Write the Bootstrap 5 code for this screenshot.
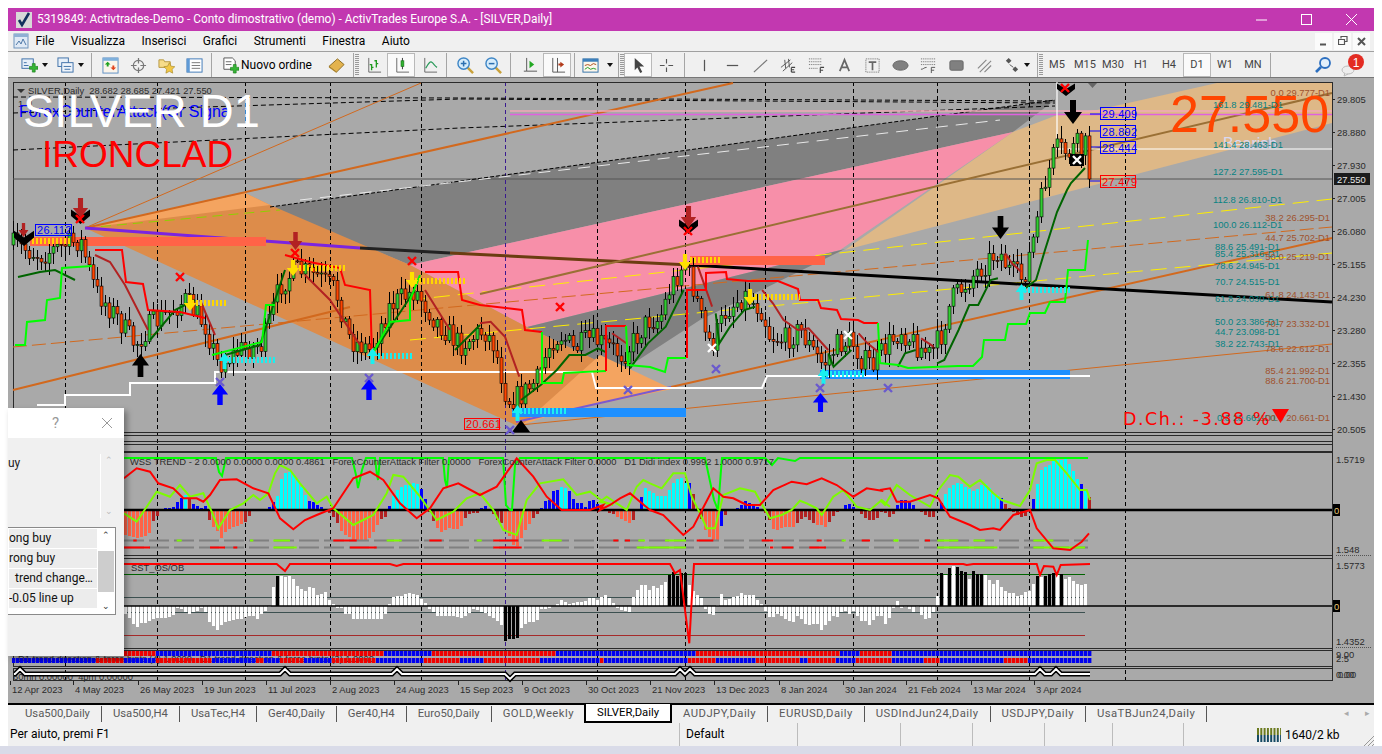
<!DOCTYPE html>
<html lang="it">
<head>
  <meta charset="UTF-8" />
  <title>SILVER,Daily</title>
  <link href="https://cdn.jsdelivr.net/npm/bootstrap@5.3.3/dist/css/bootstrap.min.css" rel="stylesheet" />
  <style>
    html, body { height: 100%; overflow: hidden; background: #fff; }
    body { font-family: Roboto, "Noto Sans", sans-serif; font-size: 12px; color: #000; }

    .app { width: 1366px; height: 746px; margin: 8px 8px 0; }

    .titlebar { height: 23px; background: #c238b0; color: #fff; font-size: 11.9px; }
    .titlebar .app-ico { width: 16px; height: 16px; margin: 0 5px 0 8px; }
    .win-btn { width: 45px; height: 23px; }

    .menubar { height: 21px; background: #f0f0f0; gap: 16.5px; padding-left: 5px; border-bottom: 1px solid #a0a0a0; }
    .menu-ico { width: 16px; height: 16px; margin-right: -10px; }
    .mdi-btn { width: 17px; height: 17px; background: #fbfbfb; margin-left: 2px; }

    .toolbar { height: 26px; background: #f0f0f0; padding: 1px 0 0 8px; border-bottom: 1px solid #777; }
    .tool { width: 28px; height: 24px; flex: none; }
    .tool svg { width: 17px; height: 17px; }
    .tool-w36 { width: 36px; }
    .tool-on { background: #fafafa; outline: 1px solid #b9b9b9; outline-offset: -1px; }
    .tool-sep { width: 1px; height: 24px; background: #a5a5a5; margin: 0 4px 0 3px; flex: none; }
    .tool-sep-wide { margin: 0 5px 0 4px; }
    .tool-grip { width: 4px; height: 22px; margin-left: -3px; flex: none;
      background: repeating-linear-gradient(#9a9a9a 0 1px, #f0f0f0 1px 2px); }
    .tool-order { width: 106px; }
    .tool-order svg { margin: 0 2px 0 6px; }
    .tf { color: #444; font-size: 11px; }
    .caret-mini { width: 0; height: 0; border: 3px solid transparent; border-top: 4px solid #111; border-bottom: 0; }

    .chart-wrap { height: 625px; background: #a9a9a9; }
    .chart-svg { display: block; }
    .chart-svg text { font-family: "Liberation Sans", sans-serif; font-size: 9.4px; white-space: pre; }
    .t-dark { fill: #2b2b2b; }
    .t-fib { fill: #078383; }
    .t-fib2 { fill: #a0522d; }
    .chart-svg .t-big { font-size: 47px; fill: #fff; }
    .chart-svg .t-iron { font-size: 37px; fill: #f00; }
    .chart-svg .t-blue { font-size: 16px; fill: #00f; }
    .chart-svg .t-last { font-size: 52px; fill: #ff4500; }
    .chart-svg .t-bear { font-size: 16px; fill: #d8d8f0; }
    .chart-svg .t-dch { font-family: "DejaVu Sans", sans-serif; font-size: 17.5px; fill: #f00; letter-spacing: 1.5px; }
    .chart-svg .t-box { font-size: 11px; letter-spacing: .3px; }

    .dlg { position: absolute; left: 0; top: 330px; width: 116px; height: 248px; background: #f0f0f0; box-shadow: 3px 3px 6px rgba(0,0,0,.35); }
    .dlg-head { height: 30px; background: #fff; color: #999; padding-left: 44px; }
    .dlg-head span:first-child { width: 49px; font-size: 15px; }
    .dlg-top { height: 89px; padding-top: 16px; }
    .dlg-top .dlg-uy { width: 92px; color: #222; }
    .dlg-scroll { width: 17px; height: 64px; border-left: 1px solid #fff; color: #bbb; font-size: 9px; }
    .dlg-list { width: 108px; height: 88px; border: 1px solid #8a8a8a; border-left: 0; background: #fff; padding: 1px; }
    .dlg-rows { width: 91px; overflow: hidden; }
    .dlg-row { height: 19px; margin-bottom: 1px; background: #ececec; line-height: 19px; white-space: nowrap; color: #111; }
    .dlg-row2 { padding-left: 6px; }
    .dlg-sb { width: 16px; margin-left: 1px; color: #333; font-size: 9px; }
    .dlg-thumb { height: 41px; background: #cdcdcd; }

    .tabbar { height: 20px; background: #f0f0f0; border-top: 2px solid #000; padding-left: 6px; color: #5a5a5a; font-size: 11.3px; }
    .tab-it { padding: 0 11px; line-height: 16px; height: 16px; border-right: 1px solid #555; white-space: nowrap; }
    .tab-caps { letter-spacing: .45px; }
    .tab-on { background: #fff; color: #000; border: 2px solid #000; border-top: 0; height: 19px; margin: -1px 0 0 -1px; line-height: 18px; padding: 0 11px; }
    .tab-arr { color: #aaa; font-size: 9px; }

    .statusbar { height: 23px; background: #f0f0f0; }
    .st-cell { height: 100%; line-height: 22px; border-right: 1px solid #bcbcbc; padding-left: 6px; }
    .st-help { width: 672px; padding-left: 2px; }
    .st-prof { width: 118px; }
    .st-c1 { width: 103px; }
    .st-c2 { width: 72px; }
    .st-c3 { width: 68px; }
    .st-c4 { width: 71px; }
    .st-net { padding-left: 73px; }
    .desk { height: 8px; margin: 0 -8px; background: #d9dbe8; }
  </style>
</head>
<body>
<div class="app d-flex flex-column">

  <!-- title bar -->
  <div class="titlebar d-flex align-items-center">
    <svg class="app-ico" viewBox="0 0 16 16"><rect width="16" height="16" fill="#d8d8d8"/><path d="M3 8l3 5 7-12" fill="none" stroke="#12305c" stroke-width="2.6"/></svg>
    <span class="flex-grow-1">5319849: Activtrades-Demo - Conto dimostrativo (demo) - ActivTrades Europe S.A. - [SILVER,Daily]</span>
    <div class="win-btn d-flex align-items-center justify-content-center"><svg width="11" height="11"><path d="M0 6h11" stroke="#fff"/></svg></div>
    <div class="win-btn d-flex align-items-center justify-content-center"><svg width="11" height="11"><rect x=".5" y=".5" width="10" height="10" fill="none" stroke="#fff"/></svg></div>
    <div class="win-btn d-flex align-items-center justify-content-center"><svg width="11" height="11"><path d="M0 0l11 11M11 0L0 11" stroke="#fff"/></svg></div>
  </div>

  <!-- menu bar -->
  <div class="menubar d-flex align-items-center">
    <svg class="menu-ico" viewBox="0 0 16 16"><rect x="1" y="1" width="14" height="14" fill="#dfe9f5" stroke="#6f93bb"/><rect x="1" y="1" width="14" height="3" fill="#8fb0d4"/><path d="M3 12l3-4 2 3 2-5 3 6" fill="none" stroke="#5079a8"/></svg>
    <span>File</span><span>Visualizza</span><span>Inserisci</span><span>Grafici</span><span>Strumenti</span><span>Finestra</span><span>Aiuto</span>
    <div class="ms-auto d-flex me-1">
      <div class="mdi-btn d-flex align-items-center justify-content-center"><svg width="9" height="9"><path d="M1 7.5h6" stroke="#555" stroke-width="2"/></svg></div>
      <div class="mdi-btn d-flex align-items-center justify-content-center"><svg width="10" height="10"><path d="M3 2.5V.5h6v5H7M.5 3.5h6v5h-6z" fill="none" stroke="#555" stroke-width="1.2"/></svg></div>
      <div class="mdi-btn d-flex align-items-center justify-content-center"><svg width="9" height="9"><path d="M1 1l7 7M8 1L1 8" stroke="#555" stroke-width="2"/></svg></div>
    </div>
  </div>

  <!-- tool bar -->
  <div class="toolbar d-flex align-items-center">
    <div class="tool tool-w36 d-flex align-items-center justify-content-center gap-1">
      <svg viewBox="0 0 18 18"><rect x="1" y="2" width="12" height="10" fill="#e6eff9" stroke="#3d6fa8"/><path d="M3 6h3M3 9h5" stroke="#3d6fa8"/><path d="M9 10h3V7h3v3h3v3h-3v3h-3v-3H9z" fill="#35b535" stroke="#1c7d1c" stroke-width=".7"/></svg>
      <span class="caret-mini"></span>
    </div>
    <div class="tool tool-w36 d-flex align-items-center justify-content-center gap-1">
      <svg viewBox="0 0 18 18"><rect x="1" y="1" width="11" height="9" fill="#e6eff9" stroke="#3d6fa8"/><rect x="5" y="6" width="12" height="10" fill="#eef4fb" stroke="#3d6fa8"/><path d="M7 10h8M8 13h6" stroke="#3d6fa8"/></svg>
      <span class="caret-mini"></span>
    </div>
    <div class="tool-sep"></div>
    <div class="tool d-flex align-items-center justify-content-center"><svg viewBox="0 0 18 18"><rect x="1" y="1" width="16" height="16" fill="#fbf4ea" stroke="#5c8fc4"/><rect x="1" y="1" width="16" height="3" fill="#7fb0dc"/><path d="M6 5l3 3H7v2H5V8H3z" fill="#1da01d"/><path d="M12 14l-3-3h2V9h2v2h2z" fill="#e0421d"/></svg></div>
    <div class="tool d-flex align-items-center justify-content-center"><svg viewBox="0 0 18 18"><circle cx="9" cy="9" r="5.5" fill="none" stroke="#777" stroke-width="1.3"/><path d="M9 1v6M9 11v6M1 9h6M11 9h6" stroke="#777" stroke-width="1.3"/></svg></div>
    <div class="tool d-flex align-items-center justify-content-center"><svg viewBox="0 0 18 18"><path d="M1 3h5l1 2h6v6H1z" fill="#f7dc8a" stroke="#b7973f"/><path d="M12 6l1.8 3.7 4 .6-2.9 2.8.7 4-3.6-1.9-3.6 1.9.7-4-2.9-2.8 4-.6z" fill="#f2c744" stroke="#a88a2b" stroke-width=".7"/></svg></div>
    <div class="tool d-flex align-items-center justify-content-center"><svg viewBox="0 0 18 18"><rect x="1" y="2" width="16" height="14" fill="#fff" stroke="#3d78b8"/><rect x="1" y="2" width="3" height="14" fill="#5f9ad6"/><path d="M6 6h9M6 9h9M6 12h9" stroke="#777"/></svg></div>
    <div class="tool-sep"></div>
    <div class="tool tool-order d-flex align-items-center text-nowrap"><svg viewBox="0 0 18 18"><path d="M2 1h9l3 3v9H2z" fill="#fff" stroke="#555"/><path d="M4 5h6M4 8h6" stroke="#666"/><path d="M9 11h3V8h3v3h3v3h-3v3h-3v-3H9z" fill="#35b535" stroke="#1c7d1c" stroke-width=".7"/></svg><span>Nuovo ordine</span></div>
    <div class="tool d-flex align-items-center justify-content-center"><svg viewBox="0 0 18 18"><path d="M1 10l9-8 7 6-8 8z" fill="#e3b34e" stroke="#8a6a20"/><path d="M1 10l8 6v1L1 11z" fill="#b58a2e"/></svg></div>
    <div class="tool-sep"></div><div class="tool-grip"></div>
    <div class="tool d-flex align-items-center justify-content-center"><svg viewBox="0 0 18 18"><path d="M4 1v15h13" fill="none" stroke="#666"/><path d="M7 14V8H5M7 11h2M12 11V4h-2M12 7h2" fill="none" stroke="#1f9a1f" stroke-width="1.4"/></svg></div>
    <div class="tool tool-on d-flex align-items-center justify-content-center"><svg viewBox="0 0 18 18"><path d="M4 1v15h13" fill="none" stroke="#666"/><path d="M10 1v12" stroke="#333"/><rect x="8.500" y="4" width="3" height="6" fill="#2fb52f" stroke="#1a6d1a" stroke-width=".7"/></svg></div>
    <div class="tool d-flex align-items-center justify-content-center"><svg viewBox="0 0 18 18"><path d="M4 1v15h13" fill="none" stroke="#666"/><path d="M5 12c3-6 5-8 7-6s3 4 5 5" fill="none" stroke="#2a9a5a" stroke-width="1.3"/></svg></div>
    <div class="tool-sep"></div>
    <div class="tool d-flex align-items-center justify-content-center"><svg viewBox="0 0 18 18"><path d="M11 11l6 6" stroke="#c9a13a" stroke-width="2.6"/><circle cx="7" cy="7" r="6" fill="#d6ecfb" stroke="#3e86c6" stroke-width="1.5"/><path d="M7 4v6M4 7h6" stroke="#2b6fb0" stroke-width="1.6"/></svg></div>
    <div class="tool d-flex align-items-center justify-content-center"><svg viewBox="0 0 18 18"><path d="M11 11l6 6" stroke="#c9a13a" stroke-width="2.6"/><circle cx="7" cy="7" r="6" fill="#d6ecfb" stroke="#3e86c6" stroke-width="1.5"/><path d="M4 7h6" stroke="#2b6fb0" stroke-width="1.6"/></svg></div>
    <div class="tool-sep"></div>
    <div class="tool d-flex align-items-center justify-content-center"><svg viewBox="0 0 18 18"><path d="M6 1v14h11M3 15h3" fill="none" stroke="#555"/><path d="M9 4l5 4-5 4z" fill="#23a823"/></svg></div>
    <div class="tool tool-on d-flex align-items-center justify-content-center"><svg viewBox="0 0 18 18"><path d="M4 1v15h13M9 1v15" fill="none" stroke="#555"/><path d="M16 8l-4-3v2h-2v2h2v2z" fill="#b23a1a"/></svg></div>
    <div class="tool-sep"></div>
    <div class="tool tool-w36 d-flex align-items-center justify-content-center gap-2">
      <svg viewBox="0 0 18 18"><rect x="1" y="2" width="16" height="14" fill="#fdf6ea" stroke="#2f6fa8"/><rect x="1" y="2" width="16" height="3" fill="#3d7fbb"/><path d="M3 9l3-1 3 1 3-2 3 1" fill="none" stroke="#a84a1a"/><path d="M3 13l3-2 3 2 3-1 3 1" fill="none" stroke="#1f9a1f"/></svg>
      <span class="caret-mini"></span>
    </div>
    <div class="tool-sep"></div><div class="tool-grip"></div>
    <div class="tool tool-on d-flex align-items-center justify-content-center"><svg viewBox="0 0 18 18"><path d="M5 1l10 9h-5l3 6-2.2 1-3-6L5 14z" fill="#444"/></svg></div>
    <div class="tool d-flex align-items-center justify-content-center"><svg viewBox="0 0 18 18"><path d="M9 2v5M9 11v5M2 9h5M11 9h5" stroke="#555" stroke-width="1.2"/></svg></div>
    <div class="tool-sep tool-sep-wide"></div>
    <div class="tool d-flex align-items-center justify-content-center"><svg viewBox="0 0 18 18"><path d="M9 3v12" stroke="#555" stroke-width="1.3"/></svg></div>
    <div class="tool d-flex align-items-center justify-content-center"><svg viewBox="0 0 18 18"><path d="M3 9h12" stroke="#555" stroke-width="1.3"/></svg></div>
    <div class="tool d-flex align-items-center justify-content-center"><svg viewBox="0 0 18 18"><path d="M2 16L16 3" stroke="#777" stroke-width="1.3"/></svg></div>
    <div class="tool d-flex align-items-center justify-content-center"><svg viewBox="0 0 18 18"><path d="M1 11l10-8M3 15l10-9M5 3l1 9M9 2l1 9" stroke="#555" fill="none"/><path d="M12 11h4M12 13.5h3M12 16h4M12 11v5" stroke="#444" stroke-width="1.2" fill="none"/></svg></div>
    <div class="tool d-flex align-items-center justify-content-center"><svg viewBox="0 0 18 18"><path d="M1 2h14M1 5h14M1 8h14M1 12h10" stroke="#666" stroke-dasharray="1 1" fill="none"/><path d="M13 11h4M13 11v6M13 14h3" stroke="#444" stroke-width="1.2" fill="none"/></svg></div>
    <div class="tool d-flex align-items-center justify-content-center"><svg viewBox="0 0 18 18"><path d="M4 15L9 3l5 12M6 11h6" stroke="#666" stroke-width="1.8" fill="none"/></svg></div>
    <div class="tool d-flex align-items-center justify-content-center"><svg viewBox="0 0 18 18"><rect x="2" y="2" width="14" height="14" fill="none" stroke="#666" stroke-dasharray="1 1"/><path d="M5 5.5h8M9 5.5V14" stroke="#666" stroke-width="1.8"/></svg></div>
    <div class="tool d-flex align-items-center justify-content-center"><svg viewBox="0 0 18 18"><ellipse cx="9" cy="9" rx="8" ry="5" fill="#808080" stroke="#666"/></svg></div>
    <div class="tool d-flex align-items-center justify-content-center"><svg viewBox="0 0 18 18"><path d="M1 2h15M1 5h15M1 8h15" stroke="#666" stroke-dasharray="1 1" fill="none"/><path d="M1 13c3 0 3-2 6-2M12 11h4M12 11v6M12 14h3" stroke="#555" fill="none"/></svg></div>
    <div class="tool d-flex align-items-center justify-content-center"><svg viewBox="0 0 18 18"><rect x="2" y="4" width="14" height="10" rx="1.5" fill="#808080" stroke="#666"/></svg></div>
    <div class="tool d-flex align-items-center justify-content-center"><svg viewBox="0 0 18 18"><path d="M2 12l9-9M4 16L16 4M9 16l7-7" stroke="#888" stroke-width="1.2"/></svg></div>
    <div class="tool tool-w36 d-flex align-items-center justify-content-center gap-1"><svg viewBox="0 0 18 18"><path d="M6 1l3 3-3 3-3-3zM13 10l3 3-3 3-3-3z" fill="#555"/><path d="M7 8l4 3" stroke="#555"/></svg><span class="caret-mini"></span></div>
    <div class="tool-sep"></div><div class="tool-grip"></div>
    <div class="tool tf d-flex align-items-center justify-content-center">M5</div>
    <div class="tool tf d-flex align-items-center justify-content-center">M15</div>
    <div class="tool tf d-flex align-items-center justify-content-center">M30</div>
    <div class="tool tf d-flex align-items-center justify-content-center">H1</div>
    <div class="tool tf d-flex align-items-center justify-content-center">H4</div>
    <div class="tool tf tool-on d-flex align-items-center justify-content-center">D1</div>
    <div class="tool tf d-flex align-items-center justify-content-center">W1</div>
    <div class="tool tf d-flex align-items-center justify-content-center">MN</div>
    <div class="tool-sep"></div>
    <div class="ms-auto d-flex align-items-center gap-2 me-2">
      <svg width="18" height="18" viewBox="0 0 18 18"><circle cx="11" cy="7" r="5" fill="#e3f0fb" stroke="#2c6fc0" stroke-width="1.8"/><path d="M7 11l-5 5" stroke="#2c6fc0" stroke-width="2.6"/></svg>
      <svg width="26" height="24" viewBox="0 0 26 24"><ellipse cx="8" cy="17" rx="6" ry="4" fill="#eee" stroke="#bbb"/><path d="M5 20l-1 3 4-2" fill="#eee" stroke="#bbb"/><circle cx="16" cy="9" r="8" fill="#e32b22"/><text x="16" y="13.5" text-anchor="middle" fill="#fff" font-size="12" font-family="Liberation Sans">1</text></svg>
    </div>
  </div>

  <!-- chart area: a free canvas in screen coordinates -->
  <div class="chart-wrap position-relative">
    <svg class="chart-svg" id="chart" width="1366" height="625" viewBox="8 78 1366 625">
      <defs>
        <symbol id="dn" viewBox="0 0 20 24" preserveAspectRatio="none" overflow="visible"><path d="M7 0h6v12h6L10 24 1 12h6z"/></symbol>
        <symbol id="up" viewBox="0 0 20 24" preserveAspectRatio="none" overflow="visible"><path d="M7 24h6V12h6L10 0 1 12h6z"/></symbol>
        <symbol id="chev" viewBox="0 0 20 20" preserveAspectRatio="none" overflow="visible"><path d="M0 2l10 8 10-8v8L10 20 0 10z"/></symbol>
      </defs>

      <!-- filled channels -->
      <polygon points="270,207 1055,100 1013,132 410,265" fill="#808080"/>
      <polygon points="410,265 1013,132 840,250 527,327" fill="#f78fa9"/>
      <polygon points="527,327 845,249 700,320 620,372" fill="#808080"/>
      <polygon points="845,250 1013,132 1060,114 1097,110 1217,83 1332,83 1332,123 1037,200" fill="#deb887"/>
      <polygon points="85,228 245,193 270,205 410,265 527,327 600,362 520,427" fill="#dd8c4a"/>
      <polygon points="85,228 245,193 270,205" fill="#f4a460"/>
      <polygon points="522,425 600,355 672,389 560,412" fill="#f4a460"/>

      <g id="grid"></g>

      <!-- frames -->
      <g fill="none" stroke="#2a2a2a">
        <rect x="13.5" y="82.5" width="1319" height="350"/>
        <rect x="13.5" y="435.5" width="1319" height="6"/>
        <rect x="13.5" y="444.5" width="1319" height="7"/>
        <rect x="13.5" y="452.5" width="1319" height="103"/>
        <rect x="13.5" y="558.5" width="1319" height="90"/>
        <rect x="13.5" y="650.5" width="1319" height="16"/>
        <rect x="13.5" y="668.5" width="1319" height="12"/>
      </g>

      <!-- trend lines -->
      <g fill="none">
        <path d="M13 179H1332" stroke="#555"/>
        <path d="M13 97L460 98 1055 101M13 113L460 99 1055 103M13 150L460 128 1055 106" stroke="#000" stroke-dasharray="5 3"/>
        <path d="M270 207L1055 100" stroke="#000" stroke-dasharray="4 2"/>
        <path d="M300 200L1000 120" stroke="#e8e8e8" stroke-dasharray="12 8"/>
        <path d="M85 228L280 210" stroke="#8ed000" stroke-dasharray="10 6"/>
        <path d="M85 228L421 83" stroke="#d2691e"/>
        <path d="M85 228L733 83" stroke="#d2691e" stroke-width="2"/>
        <path d="M13 390L350 307M671 387L1332 238" stroke="#d2691e" stroke-width="2"/>
        <path d="M13 347L1332 227" stroke="#d2691e" stroke-dasharray="14 5"/>
        <path d="M520 425L1332 344" stroke="#d2691e"/>
        <path d="M410 300L1332 199M410 340L1332 253" stroke="#ffee00" stroke-dasharray="16 8"/>
        <path d="M85 228L360 248" stroke="#7b24e0" stroke-width="3"/>
        <path d="M360 248L450 253" stroke="#222" stroke-width="3"/>
        <path d="M450 253L690 265" stroke="#6b3d10" stroke-width="3"/>
        <path d="M690 265L1332 302" stroke="#000" stroke-width="3"/>
        <path d="M480 294L1332 93" stroke="#9a7035" stroke-width="2"/>
        <path d="M510 111H1332" stroke="#f0a8b8" stroke-width="1.5"/>
        <path d="M510 114.500H1332" stroke="#e060e0" stroke-width="1.5"/>
        <path d="M1057 82V149H1332" stroke="#fff" stroke-width="1.2"/>
        <path d="M1100 114H1090M1100 131H1090M1100 147H1090M1100 181H1090" stroke="#00f"/>
        <path d="M516 422L671 387" stroke="#7b5ad0" stroke-width="2"/>
      </g>

      <!-- signal bands -->
      <rect x="30" y="237" width="236" height="9" fill="#ff6347"/>
      <rect x="690" y="256" width="135" height="9" fill="#ff6347"/>
      <rect x="512" y="408" width="174" height="9" fill="#1e90ff"/>
      <rect x="820" y="370" width="250" height="9" fill="#1e90ff"/>
      <path fill="none" stroke="#fff" stroke-width="2" d="M37 405H65V395H130V383H215V372H592L596 388H762L767 376H1090"/>

      <g id="candles"></g>
      <g id="lines"></g>
      <g id="steps"></g>

      <!-- hatch trails -->
      <g fill="none" stroke-dasharray="2 2" stroke-width="6">
        <path d="M32 241H72M192 303H226M295 268H345M415 281H465M690 260H722M755 297H800" stroke="#ffd700"/>
        <path d="M225 360H275M378 356H412M520 411H566M826 374H866M1024 290H1070" stroke="#19f0f0"/>
      </g>

      <!-- arrows and crosses -->
      <g>
        <use href="#chev" x="14" y="229" width="20" height="17"/>
        <use href="#dn" x="18" y="223" width="11" height="14" fill="#b22222"/>
        <use href="#chev" x="71" y="208" width="19" height="16"/>
        <use href="#dn" x="72" y="198" width="17" height="20" fill="#b22222"/>
        <use href="#dn" x="288" y="232" width="15" height="18" fill="#b22222"/>
        <use href="#chev" x="679" y="218" width="19" height="16"/>
        <use href="#dn" x="680" y="206" width="17" height="22" fill="#b22222"/>
        <use href="#dn" x="991" y="216" width="19" height="23"/>
        <use href="#dn" x="1063" y="100" width="20" height="24"/>
        <use href="#chev" x="1057" y="82" width="18" height="14"/>
        <path d="M1088 83h9l-4.500 5z" fill="#666"/>
        <use href="#up" x="131" y="354" width="19" height="23"/>
        <use href="#up" x="211" y="384" width="18" height="21" fill="#00f"/>
        <use href="#up" x="360" y="379" width="18" height="21" fill="#00f"/>
        <use href="#up" x="812" y="393" width="17" height="19" fill="#00f"/>
        <path d="M512 432l9-12 9 12z"/>
        <use href="#dn" x="286" y="260" width="14" height="16" fill="#ffe000"/>
        <use href="#dn" x="405" y="272" width="14" height="16" fill="#ffe000"/>
        <use href="#dn" x="183" y="295" width="14" height="16" fill="#ffe000"/>
        <use href="#dn" x="678" y="254" width="14" height="16" fill="#ffe000"/>
        <use href="#dn" x="743" y="289" width="14" height="16" fill="#ffe000"/>
        <use href="#up" x="366" y="348" width="13" height="16" fill="#19f0f0"/>
        <use href="#up" x="511" y="405" width="13" height="16" fill="#19f0f0"/>
        <use href="#up" x="817" y="368" width="13" height="16" fill="#19f0f0"/>
        <use href="#up" x="1015" y="284" width="13" height="16" fill="#19f0f0"/>
        <use href="#up" x="218" y="353" width="13" height="16" fill="#19f0f0"/>
        <rect x="1070" y="154" width="14" height="12" fill="#000"/>
      </g>
      <g id="crosses"></g>

      <!-- labels -->
      <path d="M17 89h8l-4 4z" fill="#333"/>
      <text x="28" y="94" class="t-dark">SILVER,Daily  28.682 28.685 27.421 27.550</text>
      <text x="18" y="107" class="t-dark">1  1</text>
      <text x="19" y="117" class="t-blue">ForexCounterAttack(Gr Signa</text>
      <text x="23" y="127" class="t-big">SILVER D1</text>
      <text x="42" y="167" class="t-iron">IRONCLAD</text>

      <text x="1170" y="132" class="t-last">27.550</text>
      <text x="1223" y="149" class="t-bear">Bearish</text>

      <g>
        <text x="1213" y="108" class="t-fib">161.8 29.481-D1</text>
        <text x="1213" y="148" class="t-fib">141.4 28.463-D1</text>
        <text x="1213" y="175" class="t-fib">127.2 27.595-D1</text>
        <text x="1213" y="203" class="t-fib">112.8 26.810-D1</text>
        <text x="1213" y="228" class="t-fib">100.0 26.112-D1</text>
        <text x="1215" y="250" class="t-fib">88.6 25.491-D1</text>
        <text x="1215" y="257" class="t-fib">85.4 25.316-D1</text>
        <text x="1215" y="269" class="t-fib">78.6 24.945-D1</text>
        <text x="1215" y="285" class="t-fib">70.7 24.515-D1</text>
        <text x="1215" y="302" class="t-fib">61.8 24.030-D1</text>
        <text x="1215" y="325" class="t-fib">50.0 23.386-D1</text>
        <text x="1215" y="335" class="t-fib">44.7 23.098-D1</text>
        <text x="1215" y="347" class="t-fib">38.2 22.743-D1</text>
        <text x="1217" y="421" class="t-fib">0.0 20.661-D1</text>
      </g>
      <g text-anchor="end">
        <text x="1330" y="96" class="t-fib2">0.0 29.777-D1</text>
        <text x="1330" y="221" class="t-fib2">38.2 26.295-D1</text>
        <text x="1330" y="241" class="t-fib2">44.7 25.702-D1</text>
        <text x="1330" y="260" class="t-fib2">50.0 25.219-D1</text>
        <text x="1330" y="298" class="t-fib2">61.8 24.143-D1</text>
        <text x="1330" y="327" class="t-fib2">70.7 23.332-D1</text>
        <text x="1330" y="352" class="t-fib2">78.6 22.612-D1</text>
        <text x="1330" y="374" class="t-fib2">85.4 21.992-D1</text>
        <text x="1330" y="384" class="t-fib2">88.6 21.700-D1</text>
        <text x="1330" y="421" class="t-fib2">100.0 20.661-D1</text>
      </g>
      <text x="1123" y="425" class="t-dch">D.Ch.: -3.88 %</text>
      <path d="M1272 409h17l-8.500 14z" fill="#f00"/>

      <g fill="none" stroke="#00f">
        <rect x="1100.500" y="107.500" width="35" height="12"/>
        <rect x="1100.500" y="125.500" width="35" height="12"/>
        <rect x="1100.500" y="141.500" width="35" height="12"/>
        <rect x="35.500" y="224.500" width="36" height="11"/>
      </g>
      <g fill="none" stroke="#f00">
        <rect x="1100.500" y="175.500" width="35" height="12"/>
        <rect x="464.500" y="418.500" width="35" height="11"/>
      </g>
      <g>
        <text x="1102" y="118" fill="#00f" class="t-box">29.409</text>
        <text x="1102" y="136" fill="#00f" class="t-box">28.892</text>
        <text x="1102" y="152" fill="#00f" class="t-box">28.444</text>
        <text x="1102" y="186" fill="#f00" class="t-box">27.479</text>
        <text x="37" y="234" fill="#00f" class="t-box">26.112</text>
        <text x="466" y="428" fill="#f00" class="t-box">20.661</text>
      </g>

      <!-- price axis -->
      <g id="axis" class="t-dark"></g>
      <path d="M1332.500 82V681" stroke="#2a2a2a"/>
      <rect x="1334" y="173" width="36" height="12" fill="#1c1c1c"/>
      <text x="1337" y="183" fill="#e8e8e8">27.550</text>

      <!-- indicator panels -->
      <g id="hist"></g>
      <path d="M13 510H1332" stroke="#000" stroke-width="2.400"/>
      <g id="rows"></g>
      <g id="curves"></g>
      <text x="130" y="465" class="t-dark">WSS TREND - 2 0.0000 0.0000 0.0000 0.4861   ForexCounterAttack Filter 0.0000   ForexCounterAttack Filter 0.0000   D1 Didi index 0.9992 1.0000 0.9717</text>

      <path d="M13 574.500H1085" stroke="#006400"/>
      <path d="M13 597.500H1085M13 612.500H1085" stroke="#3c5050"/>
      <path d="M13 635.500H1085" stroke="#a52a2a"/>
      <g id="osc"></g>
      <path d="M13 606H1332" stroke="#000" stroke-width="1.500"/>
      <g id="osc-line"></g>
      <text x="131" y="571" class="t-dark">SST_OS/OB</text>

      <text x="1336" y="463" class="t-dark">1.5719</text>
      <rect x="1333" y="504" width="7" height="12" fill="#000"/><text x="1334" y="514" fill="#e8c878">0</text>
      <text x="1336" y="553" class="t-dark">1.548</text>
      <text x="1336" y="569" class="t-dark">1.5773</text>
      <rect x="1333" y="600" width="7" height="12" fill="#000"/><text x="1334" y="610" fill="#e8c878">0</text>
      <text x="1336" y="645" class="t-dark">1.4352</text>
      <path d="M1336 555.500H1372M1336 647.500H1372" stroke="#555" stroke-dasharray="1 1"/>
      <text x="1336" y="658" class="t-dark">9.00</text>
      <text x="1336" y="662" class="t-dark">2.5</text>
      <text x="1336" y="678" class="t-dark">0.00</text>
      <text x="1338" y="678" class="t-dark">0.00</text>

      <!-- strips -->
      <text x="18" y="662" class="t-dark">D1 trend direction &amp; force hints (4) 1.0000   D1 trend direction &amp; force hints (3) 1.0000</text>
      <g id="strips"></g>
      <text x="13" y="680" class="t-dark">60mn 0.00000  4pm 0.00000</text>
      <path id="zig-b" fill="none" stroke="#000" stroke-width="5"/>
      <path id="zig-w" fill="none" stroke="#fff" stroke-width="1.800"/>

      <!-- time axis -->
      <g id="dates" class="t-dark"></g>
    </svg>

    <!-- dialog left open over the chart -->
    <div class="dlg">
      <div class="dlg-head d-flex align-items-center">
        <span>?</span>
        <svg width="12" height="12"><path d="M1 1l10 10M11 1L1 11" stroke="#999"/></svg>
      </div>
      <div class="dlg-top d-flex align-items-start">
        <span class="dlg-uy">uy</span>
        <div class="dlg-scroll d-flex flex-column justify-content-between align-items-center"><span>&#8963;</span><span>&#8964;</span></div>
      </div>
      <div class="dlg-list d-flex">
        <div class="dlg-rows">
          <div class="dlg-row">ong buy</div>
          <div class="dlg-row">rong buy</div>
          <div class="dlg-row dlg-row2">trend change&#8230;</div>
          <div class="dlg-row">-0.05 line up</div>
        </div>
        <div class="dlg-sb d-flex flex-column justify-content-between align-items-center">
          <span>&#8963;</span>
          <div class="dlg-thumb w-100"></div>
          <span>&#8964;</span>
        </div>
      </div>
    </div>
  </div>

  <!-- chart tabs -->
  <div class="tabbar d-flex align-items-center">
    <span class="tab-it">Usa500,Daily</span><span class="tab-it">Usa500,H4</span><span class="tab-it">UsaTec,H4</span><span class="tab-it">Ger40,Daily</span><span class="tab-it">Ger40,H4</span><span class="tab-it">Euro50,Daily</span><span class="tab-it tab-caps border-0">GOLD,Weekly</span><span class="tab-on">SILVER,Daily</span><span class="tab-it tab-caps">AUDJPY,Daily</span><span class="tab-it tab-caps">EURUSD,Daily</span><span class="tab-it tab-caps">USDIndJun24,Daily</span><span class="tab-it tab-caps">USDJPY,Daily</span><span class="tab-it tab-caps">UsaTBJun24,Daily</span>
    <span class="ms-auto tab-arr d-flex gap-3 me-1"><span>&#9666;</span><span>&#9656;</span></span>
  </div>

  <!-- status bar -->
  <div class="statusbar d-flex">
    <div class="st-cell st-help">Per aiuto, premi F1</div>
    <div class="st-cell st-prof">Default</div>
    <div class="st-cell st-c1"></div>
    <div class="st-cell st-c2"></div>
    <div class="st-cell st-c2"></div>
    <div class="st-cell st-c3"></div>
    <div class="st-cell st-c4"></div>
    <div class="st-cell st-net d-flex align-items-center gap-1 border-0 flex-grow-1">
      <svg width="24" height="14"><path d="M0 3.500H24" stroke="#6b7a1e" stroke-width="7" stroke-dasharray="2 1.300"/><path d="M0 10.500H24" stroke="#164a63" stroke-width="7" stroke-dasharray="2 1.300"/></svg>
      <span>1640/2 kb</span>
      <svg class="ms-auto align-self-end" width="12" height="12"><path d="M12 2L2 12M12 6L6 12M12 10l-2 2" stroke="#999"/></svg>
    </div>
  </div>
  <div class="desk"></div>
</div>

<script>
const ns = "http://www.w3.org/2000/svg";
function add(group, tag, attrs) {
  const node = document.createElementNS(ns, tag);
  for (const k in attrs) node.setAttribute(k, attrs[k]);
  document.getElementById(group).appendChild(node);
  return node;
}
// the zoomed crops gave me coordinates at 3x, these turn them back into screen ones
function mapZ(ox, oy, sx, flat) {
  const out = [];
  for (let i = 0; i < flat.length; i += 2) out.push([ox + flat[i] / sx, oy + flat[i + 1] / 3]);
  return out;
}
function line(group, pts, color, width, dash) {
  const a = { points: pts.map(p => p[0].toFixed(1) + "," + p[1].toFixed(1)).join(" "), fill: "none", stroke: color, "stroke-width": width };
  if (dash) a["stroke-dasharray"] = dash;
  add(group, "polyline", a);
}
function interp(ctrl, x) {
  if (x <= ctrl[0][0]) return ctrl[0][1];
  for (let i = 1; i < ctrl.length; i++) {
    if (x <= ctrl[i][0]) {
      const t = (x - ctrl[i - 1][0]) / (ctrl[i][0] - ctrl[i - 1][0] || 1);
      return ctrl[i - 1][1] + t * (ctrl[i][1] - ctrl[i - 1][1]);
    }
  }
  return ctrl[ctrl.length - 1][1];
}
function pairs(ox, flat) {
  const out = [];
  for (let i = 0; i < flat.length; i += 2) out.push([ox + flat[i] / 3, flat[i + 1]]);
  return out;
}

// grid
[65, 157, 245, 330, 421, 505, 597, 685, 765, 853, 937, 1029, 1125].forEach(x => {
  add("grid", "path", { d: `M${x + .5} 82V681`, stroke: x === 505 ? "#3a1a90" : "#000", "stroke-dasharray": "4 3" });
});

// price axis and dates
[["29.805", 99], ["28.880", 132], ["27.930", 165], ["27.005", 198], ["26.080", 231], ["25.155", 264], ["24.230", 297], ["23.280", 330], ["22.355", 363], ["21.430", 396], ["20.505", 429]].forEach(([t, y]) => {
  add("axis", "path", { d: `M1332 ${y + .5}h3`, stroke: "#222" });
  add("axis", "text", { x: 1337, y: y + 4, class: "t-dark" }).textContent = t;
});
[["12 Apr 2023", 12], ["4 May 2023", 75], ["26 May 2023", 140], ["19 Jun 2023", 204], ["11 Jul 2023", 268], ["2 Aug 2023", 332], ["24 Aug 2023", 396], ["15 Sep 2023", 460], ["9 Oct 2023", 524], ["30 Oct 2023", 588], ["21 Nov 2023", 652], ["13 Dec 2023", 716], ["8 Jan 2024", 781], ["30 Jan 2024", 845], ["21 Feb 2024", 908], ["13 Mar 2024", 973], ["3 Apr 2024", 1036]].forEach(([t, x]) => {
  add("dates", "path", { d: `M${x - 1.5} 681v4`, stroke: "#222" });
  add("dates", "text", { x: x, y: 693, class: "t-dark" }).textContent = t;
});

// candles: a noisy walk along the price path read off the picture
const pricePath = [[13,245],[40,255],[65,245],[80,240],[95,290],[115,315],[135,345],[150,325],[165,315],[185,300],[205,325],[218,365],[240,350],[262,345],[280,285],[295,270],[315,275],[335,290],[350,340],[370,350],[390,305],[415,290],[435,320],[460,345],[484,330],[494,345],[507,400],[521,395],[537,380],[551,340],[562,335],[573,350],[587,340],[594,340],[605,345],[623,355],[634,340],[648,320],[659,320],[669,290],[684,262],[694,290],[705,335],[712,345],[726,310],[744,295],[762,310],[769,335],[784,340],[800,330],[812,350],[823,365],[837,345],[851,340],[862,360],[873,365],[887,345],[901,330],[916,345],[930,355],[941,335],[951,300],[973,275],[984,265],[998,250],[1009,270],[1023,280],[1034,235],[1045,180],[1055,155],[1070,150],[1085,150],[1089,179]];
let seed = 7;
function rnd() { seed = (seed * 16807) % 2147483647; return seed / 2147483647; }
let prev = 245;
for (let x = 13; x <= 1089; x += 4) {
  const noise = x > 1045 ? 34 : 24;
  const close = interp(pricePath, x) + (x < 1089 ? (rnd() - .5) * noise : 0);
  const top = Math.min(prev, close), bot = Math.max(prev, close);
  add("candles", "path", { d: `M${x + .5} ${(top - 2 - rnd() * 11).toFixed(0)}V${(bot + 2 + rnd() * 11).toFixed(0)}`, stroke: "#000" });
  add("candles", "rect", { x: x - 1, y: top.toFixed(1), width: 3, height: Math.max(1, bot - top).toFixed(1), fill: close < prev ? "#32cd32" : "#ff4500", stroke: "#000", "stroke-width": .6 });
  prev = close;
}

// trend-coloured average, one stretch per colour
const dkg = "#006400", brk = "#b22222";
[[dkg, [[18,277],[40,272],[55,270],[75,280]]],
 [brk, [[95,255],[110,262],[125,285],[148,330]]],
 [dkg, [[150,340],[175,310],[195,300]]],
 [brk, [[200,300],[215,335]]],
 [dkg, [[225,355],[260,345],[275,300],[285,270]]],
 [brk, [[305,275],[330,300],[360,345]]],
 [dkg, [[375,350],[395,320],[415,290]]],
 [brk, [[425,290],[450,330]]],
 [dkg, [[455,350],[480,325]]],
 [brk, mapZ(480,200,2.8,[0,370,30,365,70,410,90,470,110,530])],
 [dkg, mapZ(480,200,2.8,[115,600,170,555,215,510,250,465,295,465,330,445,355,458])],
 [brk, mapZ(480,200,2.8,[370,400,410,430])],
 [dkg, mapZ(480,200,2.8,[420,505,470,430,520,380,570,270])],
 [brk, mapZ(480,200,2.8,[610,200,640,290,650,320])],
 [dkg, mapZ(480,200,2.8,[660,340,670,430,700,380,740,330,770,320])],
 [brk, mapZ(480,200,2.8,[790,270,820,310,850,360,890,390,920,385,975,450])],
 [dkg, mapZ(480,200,2.8,[975,460,990,500,1040,450])],
 [brk, mapZ(480,200,2.8,[1060,400,1085,430,1120,460])],
 [dkg, mapZ(480,200,2.8,[1170,500,1190,460,1220,450])],
 [brk, mapZ(480,200,2.8,[1235,415,1270,440])],
 [dkg, mapZ(480,200,2.8,[1280,490,1300,480,1340,390,1370,315,1395,315,1430,240,1450,235])],
 [brk, mapZ(480,200,2.8,[1470,160,1490,190,1515,215])],
 [dkg, [[1023,290],[1036,280],[1045,250],[1057,212],[1067,190],[1071,183],[1085,168]]]
].forEach(([c, pts]) => line("lines", pts, c, 2));

// stop line, green under price and red over it
const lime = "#00ff00", red = "#ff0000";
[[lime, [[15,345],[25,345],[27,322],[45,320],[47,300],[60,298],[62,268],[92,266]]],
 [red, [[95,250],[122,250],[126,282],[143,284],[148,310],[180,312],[205,318]]],
 [lime, [[212,355],[262,342],[266,305],[275,305]]],
 [red, [[285,255],[310,262],[340,268],[345,285],[370,290],[372,355]]],
 [lime, [[372,355],[390,322],[410,320],[410,300],[420,275]]],
 [red, [[425,272],[458,272],[462,300],[480,305],[522,310],[525,330],[542,332]]],
 [lime, [[542,332],[542,383],[562,383],[564,373],[583,372],[606,371]]],
 [red, [[606,371],[606,326],[626,326]]],
 [lime, [[626,326],[628,365],[650,367],[665,372],[668,358],[686,358]]],
 [red, [[687,358],[687,290],[706,290],[706,273],[726,272],[727,279],[748,281],[778,281],[798,289],[800,300],[818,300],[821,308],[837,310],[841,319],[858,320],[864,323],[878,323]]],
 [lime, [[878,323],[880,363],[898,365],[908,368],[958,366],[973,366],[982,357],[984,340],[1005,340],[1008,324],[1026,324],[1030,313],[1045,313],[1050,302],[1065,302],[1068,270],[1085,270],[1088,240]]]
].forEach(([c, pts]) => line("steps", pts, c, 2));

// small crosses
[["#f00",180,277],["#f00",412,261],["#f00",560,307],["#f00",295,253],["#f00",80,219],["#f00",688,231],["#f00",1065,88],
 ["#6a5acd",220,382],["#6a5acd",369,378],["#6a5acd",628,390],["#6a5acd",716,369],["#6a5acd",820,388],["#6a5acd",888,388],["#6a5acd",510,430],
 ["#fff",712,348],["#fff",848,335],["#fff",1077,160]].forEach(([c, x, y]) => {
  add("crosses", "path", { d: `M${x-4} ${y-4}l8 8M${x+4} ${y-4}l-8 8`, stroke: c, "stroke-width": 2.4 });
});

// histogram of the WSS panel
const hist1 = pairs(120,[15,-25,50,-28,85,-25,100,-10,113,-5,125,2,150,2,160,3,170,8,182,12,194,15,204,15,208,10,220,6,245,2,257,5,270,-15,290,-20,300,-30,315,-22,330,-18,345,-17,360,-15,375,-12,388,-6,400,-1,425,-1,447,3,460,8,472,15,485,34,497,38,510,38,520,36,533,30,545,22,557,14,568,8,580,8,592,5,615,0,640,-7,650,-12,660,-20,675,-25,690,-27,700,-30,712,-31,725,-31,740,-29,750,-27,765,-18,780,-10,795,-7,815,12,830,20,850,25,870,25,885,28,900,22,910,18,922,2,935,-8,950,-18,962,-22,975,-20,990,-18,1005,-20,1020,-18,1035,-8,1050,-3,1072,-3,1085,3,1097,4,1118,-3,1130,-10,1145,-14,1155,-20,1170,-27,1185,-40,1200,-30,1215,-20,1240,-8,1255,-3,1265,3,1277,10,1290,10,1300,20,1312,20,1325,23,1337,22,1349,18,1360,10,1372,7,1384,7,1396,3,1408,10,1420,10,1440,2,1455,-1,1490,-6]);
const hist3 = pairs(600,[50,-7,60,-8,70,-10,88,-13,100,-10,112,2,125,15,135,22,150,18,160,17,172,14,185,14,197,14,210,22,222,28,235,32,247,32,258,25,270,28,282,12,295,-3,305,-10,315,-20,328,-28,340,-30,352,-30,365,-13,378,-3,390,-1,410,2,422,5,435,9,447,7,460,6,472,3,485,0,495,-3,507,-10,520,-20,532,-20,545,-18,557,-17,570,-17,582,-17,592,-13,605,-8,617,-7,630,-11,640,-13,652,-15,665,-15,677,-17,688,-12,700,-5,725,2,737,5,750,6,760,3,772,0,785,-5,797,-9,810,-10,820,-10,835,-7]);
const hist4 = pairs(880,[0,-2,12,-2,25,-7,38,-5,50,4,62,10,75,10,87,9,100,5,112,1,125,-2,137,-6,150,-7,162,-7,172,0,185,8,197,18,210,23,222,26,235,27,247,25,260,22,272,20,285,18,297,24,310,27,322,25,335,16,347,16,360,14,375,6,400,-2,412,-5,423,-7,436,-6,448,0,458,10,470,25,482,40,495,43,507,45,520,50,532,50,544,50,556,52,568,45,580,38,592,30,604,26,616,18,628,13]);
const histAll = hist1.concat(hist3, hist4);
const histOver = [[688,692,"#0000ff"],[693,697,"#b22222"],[999,1003,"#0000ff"],[1004,1009,"#b22222"],[1079,1083,"#0000ff"],[1087,1091,"#b22222"],[719,724,"#0000ff"],[617,631,"#ff6347"],[418,425,"#0000ff"],[187,191,"#b22222"],[550,558,"#0000ff"],[569,572,"#0000ff"]];
for (let x = 125; x <= 1089; x += 4) {
  const h = Math.round(interp(histAll, x));
  if (!h) continue;
  let c = h >= 14 ? "#00ffff" : h > 0 ? "#0000ff" : h <= -14 ? "#ff6347" : "#b22222";
  histOver.forEach(o => { if (x >= o[0] && x <= o[1]) c = o[2]; });
  add("hist", "rect", { x: x - 1, y: h > 0 ? 510 - h : 510, width: 3, height: Math.abs(h), fill: c });
}

// dashed state rows under the histogram
line("rows", [[124,540.5],[1088,540.5]], "#808080", 2, "20 5");
line("rows", [[124,547.5],[1088,547.5]], "#808080", 2, "20 5");
function marks(y, ox, flat, col) {
  for (let i = 0; i < flat.length; i += 2) line("rows", [[ox + flat[i] / 3, y], [ox + flat[i + 1] / 3, y]], col, 2);
}
const lim2 = "#7cfc00";
marks(540.5,120,[40,50,640,710,928,965,1120,1195],red);
marks(540.5,120,[170,185,390,400,460,510,800,845,1070,1085,1265,1325],lim2);
marks(547.5,120,[12,90,270,315,340,352,690,770,1120,1205],red);
marks(547.5,120,[460,530],lim2);
marks(540.5,600,[40,55,75,90,290,340,485,520,650,665,785,810],red);
marks(540.5,600,[115,135,195,258,725,737,885,895],lim2);
marks(547.5,600,[510,520,545,580,628,678],red);
marks(547.5,600,[110,258],lim2);
marks(540.5,880,[135,150],red);
marks(540.5,880,[40,55,172,235,280,315,460,520],lim2);
marks(547.5,880,[172,352,460,615],lim2);

// curves of the WSS panel
line("curves", [[124,458],[216,458],[219,472],[222,476],[226,458],[352,458],[356,475],[358,488],[362,470],[366,458],[375,458],[377,475],[378,480],[380,458],[443,458],[445,480],[447,488],[449,458],[503,458],[506,505],[510,510],[512,510],[515,465],[520,458],[705,458],[714,500],[718,510],[721,470],[722,458],[765,458],[772,465],[778,458],[795,461],[800,458],[1088,458]], lime, 2);
const limeC = mapZ(120,440,3,[12,220,50,245,80,200,110,155,150,170,180,135,210,170,250,160,275,215,295,265,330,210,370,190,400,165,420,180,445,160,465,100,480,75,510,90,540,130,590,190,620,170,640,205,700,255,760,225,800,160,820,105,850,110,900,170,950,240,1000,215,1040,175,1080,160,1120,210,1150,270,1190,285,1220,180,1260,130,1330,118,1370,165,1410,155,1450,185,1480,195])
  .concat(mapZ(600,440,3,[0,185,20,170,50,190,80,210,110,140,130,120,150,130,185,145,220,100,255,100,275,170,300,220,320,265,345,265,370,165,420,145,465,155,490,200,510,235,545,225,575,210,600,182,620,190,650,205,665,225,700,170,730,150,770,200,810,210,845,180,870,200]),
          mapZ(880,440,3,[0,180,15,195,50,135,90,165,115,180,150,200,175,150,210,105,235,110,270,140,300,120,340,160,365,180,420,198,450,150,470,70,500,60,525,60,560,100,600,150,620,150,630,180]));
line("curves", limeC, lim2, 2);
const redC = mapZ(120,440,3,[12,115,50,85,90,95,115,130,160,145,190,175,230,175,250,185,270,165,300,120,350,118,400,145,445,160,480,235,520,268,555,240,590,225,640,205,700,115,750,95,790,120,840,190,890,235,930,205,970,145,1015,130,1080,165,1130,140,1190,55,1240,110,1280,170,1325,210,1410,210,1450,195])
  .concat(mapZ(600,440,3,[0,210,30,195,60,175,90,160,120,185,150,210,190,225,250,285,280,260,340,145,370,170,400,175,440,195,480,195,520,150,575,125,620,133,665,115,710,135,760,170,800,145,850,153]),
          mapZ(880,440,3,[0,150,30,145,50,185,90,185,150,165,175,175,210,230,270,255,300,270,340,265,360,270,400,225,450,210,470,265,520,325,570,330,605,305,627,280]));
line("curves", redC, red, 2);

// oscillator bars of the SST panel
const osc = [];
function pushOsc(ox, flat) { for (let i = 0; i < flat.length; i += 2) osc.push([ox + flat[i] / 3, flat[i + 1]]); }
pushOsc(120,[12,-8,24,-10,36,-17,48,-22,60,-17,72,-17,84,-16,96,-14,108,-12,120,-12,132,-12,144,-11,156,-12,168,-2,180,-3,192,-5,204,-9,216,-6,228,-6,240,-2,252,-3,264,-15,276,-19,288,-25,300,-20,312,-16,324,-15,336,-15,348,-13,360,-13,372,-12,384,-10,396,-9,408,-14,420,-9,432,-5,444,-6,456,15,468,30,480,30,492,29,504,30,516,29,528,21,540,18,552,14,564,18,576,20,588,11,600,11,612,16,624,7,650,-2,662,-1,675,-8,687,-8,700,-13,790,-13,800,-3,820,10,840,10,868,13,890,11,910,5,925,-2,950,-10,1000,-10,1030,-12,1060,-3,1100,-8,1130,-15,1145,-20,1156,-37,1168,-33,1180,-33,1192,-32,1205,-20,1230,-16,1250,-15,1260,-3,1280,-3,1310,2,1325,7,1340,2,1380,4,1400,5,1410,9,1430,6,1456,11,1470,7]);
pushOsc(600,[0,1,15,11,28,7,50,-2,75,-5,88,-6,100,10,112,17,125,22,137,21,149,15,160,21,172,18,185,21,197,24,208,32,220,34,232,30,245,33,256,33,268,20,280,14,292,11,305,7,317,-5,329,-8,341,-9,362,12,375,6,387,7,400,9,412,10,424,13,436,11,448,11,460,11,472,5,484,2,505,-11,520,-11,532,-8,545,-10,557,-13,570,-15,582,-16,595,-8,607,-16,620,-20,632,-18,650,-17,664,-25,677,-18,690,-14,700,-10,712,-11,725,-5,737,-5,748,-8,760,-5,772,-10,784,-15,796,-15,808,-19,820,-14,832,-10]);
pushOsc(880,[0,-7,12,-19,25,-14,38,-3,50,6,62,-2,75,-1,87,-3,100,-6,112,-1,125,-11,137,-13,149,-12,160,-5,172,11,185,37,197,30,210,40,222,40,234,38,246,34,258,34,270,24,282,38,294,30,306,33,318,30,330,25,342,21,354,28,366,16,378,14,390,13,402,13,414,9,426,12,438,14,450,15,462,24,474,32,486,28,498,30,510,33,522,33,534,30,546,32,558,25,570,30,582,23,594,22,606,21,618,22]);
const blackAt = [[275,279],[503,519],[668,687],[940,944],[948,952],[956,968],[973,977],[980,984],[1035,1039],[1043,1056],[1060,1064]];
for (let x = 125; x <= 1086; x += 4) {
  const h = Math.round(interp(osc, x));
  if (!h) continue;
  const black = blackAt.some(r => x >= r[0] && x <= r[1]);
  add("osc", "rect", { x: x - 1, y: h > 0 ? 606 - h : 606, width: 3, height: Math.abs(h), fill: black ? "#000" : "#fff" });
}
line("osc-line", [[124,564]].concat(mapZ(120,440,3,[470,372,495,393,510,372,810,372,830,378,850,372]), mapZ(600,440,3,[210,372,225,400,240,390,255,510,268,610,275,480,282,372,900,372]), mapZ(880,440,3,[250,372,260,375,280,372,470,372,480,405,492,378,520,380,530,405,542,375,630,372])), red, 2);

// red and blue strips
function strip(y, spans) {
  for (let x = 13; x <= 1090; x += 4) {
    if (x < 124 && y < 655) continue;
    const s = spans.find(p => x < p[0]);
    add("strips", "rect", { x: x - 1, y: y, width: 3.4, height: 5, fill: s ? s[1] : "#00f" });
  }
}
const B = "#0000f0", R = "#f00000";
strip(651, [[156,R],[270,B],[382,R],[431,B],[556,R],[696,B],[841,R],[861,B],[893,R],[1100,B]]);
strip(658, [[96,B],[124,R],[156,B],[210,R],[257,B],[263,R],[281,B],[304,R],[333,B],[375,R],[422,B],[460,R],[484,B],[540,R],[598,B],[602,R],[686,B],[716,R],[757,B],[798,R],[809,B],[834,R],[857,B],[893,R],[922,B],[938,R],[1004,B],[1029,R],[1092,B],[1100,R]]);

// zigzag line of the last panel
let zig = "M14 674";
[[20,-1],[285,-1],[397,-1],[510,1],[680,-1],[690,-1],[1040,-1],[1056,-1]].forEach(([x, dir]) => { zig += `H${x-5}L${x} ${674 + dir * 5}L${x+5} 674`; });
zig += "H1090";
document.getElementById("zig-b").setAttribute("d", zig);
document.getElementById("zig-w").setAttribute("d", zig);
</script>
<script src="https://cdn.jsdelivr.net/npm/bootstrap@5.3.3/dist/js/bootstrap.bundle.min.js"></script>
</body>
</html>
